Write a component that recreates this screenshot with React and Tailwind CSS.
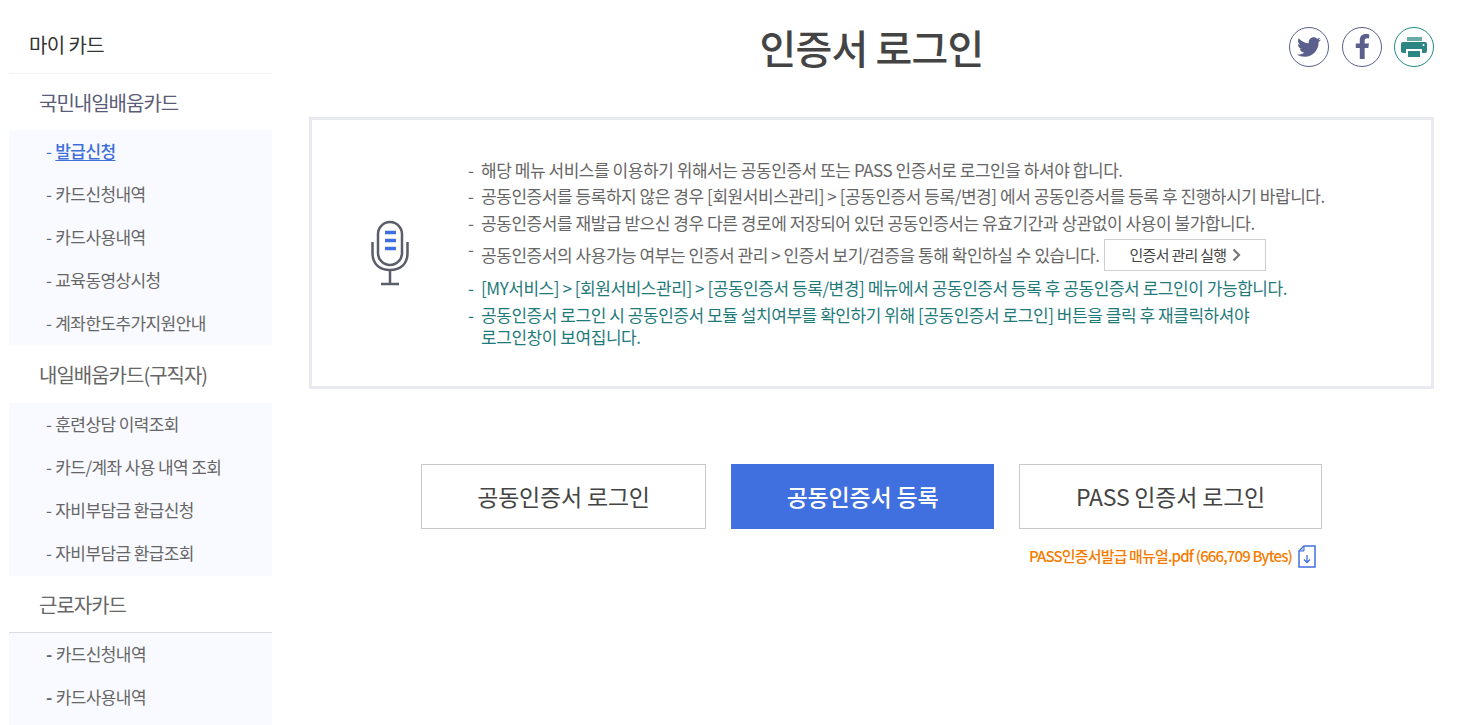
import React from 'react';
import { FaTwitter, FaFacebookF } from 'react-icons/fa';

const groups = [
  {
    title: '국민내일배움카드',
    titleClass: 'h-14 text-[#5a5c78]',
    listClass: '',
    items: ['발급신청', '카드신청내역', '카드사용내역', '교육동영상시청', '계좌한도추가지원안내'],
    active: '발급신청',
  },
  {
    title: '내일배움카드(구직자)',
    titleClass: 'h-[58px] text-[#666]',
    listClass: 'pb-px',
    items: ['훈련상담 이력조회', '카드/계좌 사용 내역 조회', '자비부담금 환급신청', '자비부담금 환급조회'],
  },
  {
    title: '근로자카드',
    titleClass: 'h-[57px] text-[#666] border-b border-[#dcdcdf]',
    listClass: '',
    items: ['카드신청내역', '카드사용내역', ''],
    bold: true,
  },
];

function Sidebar() {
  return (
    <aside className="w-[263px] ml-[9px] shrink-0">
      <div className="h-[74px] flex items-center pl-5 pt-[17px] text-[20px] tracking-[-0.6px] text-[#333] border-b border-[#f1f1f3]">
        마이 카드
      </div>
      {groups.map((g) => (
        <div key={g.title}>
          <div className={`flex items-center pl-[30px] pt-[2px] text-[20px] tracking-[-1px] ${g.titleClass}`}>{g.title}</div>
          <ul className={`bg-[#f9faff] ${g.listClass}`}>
            {g.items.map((item, i) => (
              <li key={i} className={`h-[43px] flex items-center pl-[37px] pb-px text-[17px] tracking-[-0.6px] ${item === g.active ? 'text-[#3f6fd8]' : 'text-[#666]'}`}>
                {item && (
                  <>
                    <span className={`mr-1 ${g.bold ? 'font-bold' : ''}`}>-</span>
                    <span className={item === g.active ? 'font-medium underline underline-offset-2' : ''}>{item}</span>
                  </>
                )}
              </li>
            ))}
          </ul>
        </div>
      ))}
    </aside>
  );
}

function Circle({ border, children }) {
  return (
    <span className={`w-10 h-10 rounded-full border flex items-center justify-center ${border}`}>{children}</span>
  );
}

function MicIcon() {
  return (
    <svg width="42" height="68" viewBox="0 0 42 68" fill="none">
      <rect x="9" y="3" width="24" height="43" rx="12" stroke="#5a5e68" strokeWidth="2.500" />
      <path d="M3.500 23v11c0 11 7 17 17.500 17s17.500-6 17.500-17V23" stroke="#5a5e68" strokeWidth="2.500" />
      <path d="M21 51v13M12 65h18" stroke="#5a5e68" strokeWidth="2.500" />
      <path d="M16 13.500h11M16 21.500h11M16 29.500h11" stroke="#3f6fe0" strokeWidth="3.500" />
    </svg>
  );
}

function Line({ teal, className = '', dashClass = '', children }) {
  return (
    <li className={`flex ${teal ? 'text-[#1f7a7a]' : 'text-[#666]'} ${className}`}>
      <span className={`w-[13px] shrink-0 ${dashClass}`}>-</span>
      <span>{children}</span>
    </li>
  );
}

export default function App() {
  return (
    <div className="flex h-[725px] overflow-hidden bg-white" style={{ fontFamily: '"Noto Sans CJK KR", "Noto Sans", sans-serif' }}>
      <Sidebar />
      <main className="ml-[37px] w-[1125px] shrink-0">
        <div className="grid grid-cols-[1fr_auto_1fr] items-center h-[93px]">
          <span />
          <h1 className="text-[40px] font-medium tracking-[-0.8px] text-[#444]">인증서 로그인</h1>
          <div className="flex justify-end">
            <Circle border="border-[#5a5f8c]"><FaTwitter className="text-[#5a5f8c] text-[24px]" /></Circle>
            <span className="w-[13px]" />
            <Circle border="border-[#5a5f8c]"><FaFacebookF className="text-[#5a5f8c] text-[25px]" /></Circle>
            <span className="w-3" />
            <Circle border="border-[#1f8a84]">
              <svg width="26" height="20" viewBox="0 0 26 20" fill="#2a8583">
                <path d="M6 0h15v4H6z" opacity="0.700" />
                <rect x="0" y="5" width="26" height="11" rx="2" />
                <path d="M5 12h16v8H5z" fill="#fff" />
                <path d="M7 14h12v6H7z" />
                <circle cx="22.500" cy="8" r="1" fill="#fff" />
              </svg>
            </Circle>
          </div>
        </div>
        <section className="mt-6 h-[272px] border-[3px] border-[#e9eaef] flex items-center">
          <div className="w-[156px] flex justify-center shrink-0"><MicIcon /></div>
          <ul className="text-[17px] leading-[26px] tracking-[-0.45px] pb-[2px]">
            <Line>해당 메뉴 서비스를 이용하기 위해서는 공동인증서 또는 PASS 인증서로 로그인을 하셔야 합니다.</Line>
            <Line>공동인증서를 등록하지 않은 경우 [회원서비스관리] &gt; [공동인증서 등록/변경] 에서 공동인증서를 등록 후 진행하시기 바랍니다.</Line>
            <Line className="mt-px">공동인증서를 재발급 받으신 경우 다른 경로에 저장되어 있던 공동인증서는 유효기간과 상관없이 사용이 불가합니다.</Line>
            <Line className="items-center h-[38px]" dashClass="self-start">
              <span className="flex items-center">
                공동인증서의 사용가능 여부는 인증서 관리 &gt; 인증서 보기/검증을 통해 확인하실 수 있습니다.
                <span className="ml-[5px] mt-px w-[162px] h-[32px] border border-[#cfcfcf] flex items-center justify-center text-[15px] tracking-[-0.7px] text-[#444]">
                  인증서 관리 실행
                  <svg width="9" height="14" viewBox="0 0 9 14" fill="none" className="ml-[6px]"><path d="M1.500 1.500L7 7l-5.500 5.500" stroke="#777" strokeWidth="2.200" /></svg>
                </span>
              </span>
            </Line>
            <Line teal className="mt-px">[MY서비스] &gt; [회원서비스관리] &gt; [공동인증서 등록/변경] 메뉴에서 공동인증서 등록 후 공동인증서 로그인이 가능합니다.</Line>
            <Line teal className="leading-[22px] mt-[3px]">
              <span>공동인증서 로그인 시 공동인증서 모듈 설치여부를 확인하기 위해 [공동인증서 로그인] 버튼을 클릭 후 재클릭하셔야<br />로그인창이 보여집니다.</span>
            </Line>
          </ul>
        </section>
        <div className="mt-[75px] flex justify-center gap-[25px]">
          <button className="w-[285px] h-[65px] border border-[#c9c9c9] text-[23px] text-[#444] tracking-[-0.2px]">공동인증서 로그인</button>
          <button className="w-[263px] h-[65px] bg-[#4070e0] text-[23px] font-medium text-white tracking-[-0.2px]">공동인증서 등록</button>
          <button className="w-[303px] h-[65px] border border-[#c9c9c9] text-[23px] text-[#444] tracking-[-0.2px]">PASS 인증서 로그인</button>
        </div>
        <div className="mt-[16px] flex justify-end items-center pr-[118px] text-[15px] font-medium tracking-[-0.85px] text-[#f57c00]">
          PASS인증서발급 매뉴얼.pdf (666,709 Bytes)
          <svg width="18" height="23" viewBox="0 0 18 23" fill="none" className="ml-[6px]">
            <path d="M6 1h11v21H1V6z" stroke="#4070e0" strokeWidth="1.500" fill="#fff" />
            <path d="M6 1v5H1z" fill="#b9c9ee" stroke="#4070e0" strokeWidth="1" />
            <path d="M9 10v7M6 14.500l3 3 3-3" stroke="#4070e0" strokeWidth="1.300" />
          </svg>
        </div>
      </main>
    </div>
  );
}
